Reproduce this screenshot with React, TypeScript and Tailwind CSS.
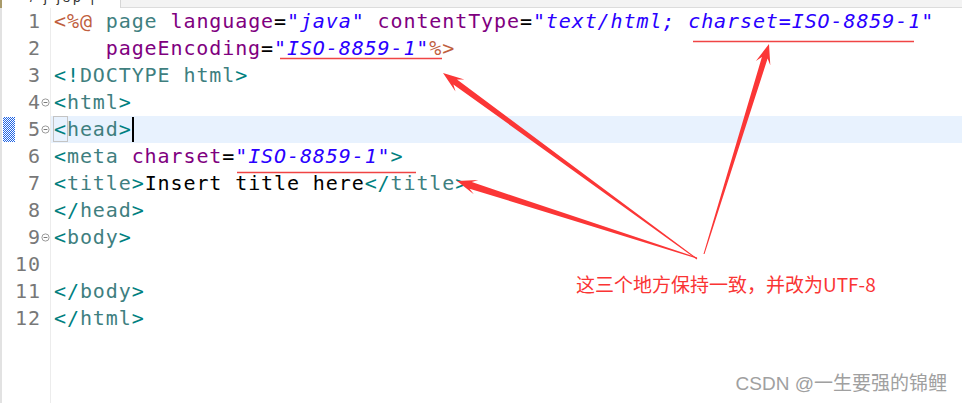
import React from 'react';

type Tok = [string, string?];

const JSP = 'text-[#bf5f3f]';
const DEL = 'text-[#008080]';
const TAG = 'text-[#3f7f7f]';
const ATTR = 'text-[#7f007f]';
const VAL = 'text-[#2a00ff] italic';
const TXT = 'text-black';

const lines: Tok[][] = [
  [['<%@', JSP], [' '], ['page', TAG], [' '], ['language', ATTR], ['=', TXT], ['"java"', VAL], [' '], ['contentType', ATTR], ['=', TXT], ['"text/html; charset=ISO-8859-1"', VAL]],
  [['    '], ['pageEncoding', ATTR], ['=', TXT], ['"ISO-8859-1"', VAL], ['%>', JSP]],
  [['<!', DEL], ['DOCTYPE', TAG], [' '], ['html', TAG], ['>', DEL]],
  [['<', DEL], ['html', TAG], ['>', DEL]],
  [],
  [['<', DEL], ['meta', TAG], [' '], ['charset', ATTR], ['=', TXT], ['"ISO-8859-1"', VAL], ['>', DEL]],
  [['<', DEL], ['title', TAG], ['>', DEL], ['Insert title here', TXT], ['</', DEL], ['title', TAG], ['>', DEL]],
  [['</', DEL], ['head', TAG], ['>', DEL]],
  [['<', DEL], ['body', TAG], ['>', DEL]],
  [],
  [['</', DEL], ['body', TAG], ['>', DEL]],
  [['</', DEL], ['html', TAG], ['>', DEL]],
];

const folds = [4, 5, 9];

function FoldIcon() {
  return (
    <svg width="9" height="9" viewBox="0 0 9 9">
      <circle cx="4.5" cy="4.5" r="3.6" fill="#fff" stroke="#9a9a9a" strokeWidth="1" />
      <line x1="2.6" y1="4.5" x2="6.4" y2="4.5" stroke="#7a7a7a" strokeWidth="1" />
    </svg>
  );
}

function arrowPoints(tx: number, ty: number, hx: number, hy: number, sw: number, hw: number, hl: number) {
  const dx = hx - tx;
  const dy = hy - ty;
  const len = Math.hypot(dx, dy);
  const ux = dx / len;
  const uy = dy / len;
  const nx = -uy;
  const ny = ux;
  const jx = hx - ux * hl * 0.72;
  const jy = hy - uy * hl * 0.72;
  const bx = hx - ux * hl;
  const by = hy - uy * hl;
  const pts = [
    [tx + nx * 0.5, ty + ny * 0.5],
    [jx + (nx * sw) / 2, jy + (ny * sw) / 2],
    [bx + (nx * hw) / 2, by + (ny * hw) / 2],
    [hx, hy],
    [bx - (nx * hw) / 2, by - (ny * hw) / 2],
    [jx - (nx * sw) / 2, jy - (ny * sw) / 2],
    [tx - nx * 0.5, ty - ny * 0.5],
  ];
  return pts.map((p) => p[0].toFixed(1) + ',' + p[1].toFixed(1)).join(' ');
}

function CodeLine({ n, toks }: { n: number; toks: Tok[] }) {
  const active = n === 5;
  return (
    <div className="flex h-[27px]">
      <div className="w-[15px] shrink-0 border-l-2 border-[#e2e2e2] flex items-center">
        {active && (
          <div className="w-[12px] h-[25px] ml-[1px] bg-[repeating-conic-gradient(#1e64e6_0_25%,#ffffff_0_50%)] bg-[length:2px_2px]" />
        )}
      </div>
      <div className="w-[26px] shrink-0 text-right text-[#787878] leading-[27px] tracking-[0.9px]">{n}</div>
      <div className="w-[9px] shrink-0 flex items-center">{folds.includes(n) && <FoldIcon />}</div>
      <div className="w-px shrink-0 bg-[#ececec]" />
      <div className={`flex-1 pl-[3px] leading-[27px] whitespace-pre tracking-[0.9px] ${active ? 'bg-[#e8f2fe]' : ''}`}>
        {active ? (
          <>
            <span className={`${DEL} outline outline-1 outline-[#c4c4c4]`}>{'<'}</span>
            <span className={TAG}>head</span>
            <span className={DEL}>{'>'}</span>
            <span className="inline-block w-[2px] h-[25px] bg-black align-[-6px]" />
          </>
        ) : (
          toks.map(([t, c], i) => (
            <span key={i} className={c ?? ''}>
              {t}
            </span>
          ))
        )}
      </div>
    </div>
  );
}

export default function App() {
  return (
    <div className="relative w-[962px] h-[403px] bg-white overflow-hidden font-['DejaVu_Sans_Mono',monospace] text-[20px]">
      {/* editor tab strip */}
      <div className="flex h-[8px]">
        <div className="w-[121px] h-[8px] bg-white border-l-2 border-[#a89a6a] border-r border-r-[#d6d6d6] overflow-hidden">
          <div className="mt-[-13px] pl-[28px] text-[14px] text-[#333] font-['Liberation_Sans',sans-serif] tracking-[3px]">/ j jsp |</div>
        </div>
        <div className="flex-1 bg-[#f3f3f3] border-b border-[#dcdcdc]" />
      </div>

      {/* code */}
      <div className="flex flex-col">
        {lines.map((toks, i) => (
          <CodeLine key={i} n={i + 1} toks={toks} />
        ))}
        <div className="flex h-[80px]">
          <div className="w-[15px] border-l-2 border-[#e2e2e2]" />
          <div className="w-[35px]" />
          <div className="w-px bg-[#ececec]" />
        </div>
      </div>

      {/* annotations */}
      <svg className="absolute inset-0 pointer-events-none" width="962" height="403" viewBox="0 0 962 403">
        <line x1="693" y1="41.5" x2="914" y2="41.5" stroke="#f04444" strokeWidth="1.4" />
        <line x1="280" y1="58.5" x2="442" y2="58.5" stroke="#f04444" strokeWidth="1.6" />
        <line x1="237" y1="172.5" x2="416" y2="172.5" stroke="#f04444" strokeWidth="1.6" />
        <polygon points={arrowPoints(697, 259, 443, 73, 6, 15, 21)} fill="#fb3636" />
        <polygon points={arrowPoints(697, 258, 457, 181, 7, 15, 20)} fill="#fb3636" />
        <polygon points={arrowPoints(704, 254, 769, 44, 6, 15, 20)} fill="#fb3636" />
      </svg>

      <div className="absolute left-[576px] top-[271px] text-[19px] leading-[26px] text-[#fa3434] font-['Noto_Sans_CJK_SC',sans-serif]">
        这三个地方保持一致，并改为UTF-8
      </div>

      <div className="absolute right-[15px] top-[371px] text-[19px] leading-[26px] text-[#a0a0a0] font-['Liberation_Sans','Noto_Sans_CJK_SC',sans-serif]">
        CSDN @一生要强的锦鲤
      </div>
    </div>
  );
}
